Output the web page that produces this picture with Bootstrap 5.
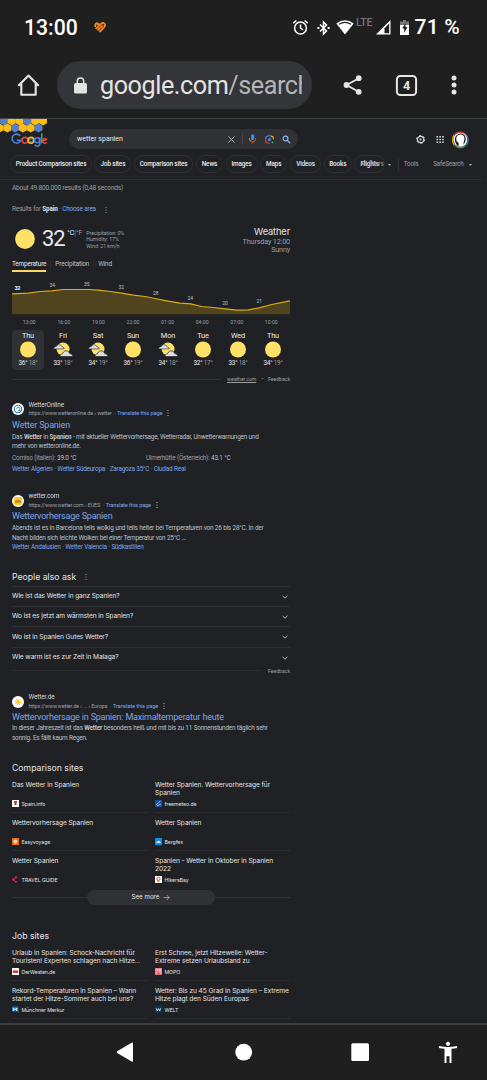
<!DOCTYPE html>
<html lang="de">
<head>
<meta charset="utf-8">
<meta name="viewport" content="width=device-width, initial-scale=1">
<title>wetter spanien</title>
<link href="https://cdn.jsdelivr.net/npm/bootstrap@5.3.0/dist/css/bootstrap.min.css" rel="stylesheet">
<style>
body{font-family:Roboto,"Liberation Sans",sans-serif;background:#202124;color:#bdc1c6;width:487px;height:1080px;overflow:hidden;font-size:6px;line-height:9.5px}
svg{display:block;flex:none}
a,a:not([href]):not([class]){text-decoration:none;color:#7ea6ea}
.gs{font-family:Inter,Roboto,sans-serif;color:#e2e4e8}
.statusbar{height:55px;background:#1f1f1f;color:#fff;padding-left:24px}
.clock{font-size:21.2px;font-weight:500;width:54px}
.lte{font-size:10.5px;color:#777;font-weight:500;letter-spacing:-.1px}
.batt{font-size:21px;font-weight:500;letter-spacing:.25px}
.toolbar{height:64px;background:#1f1f1f;border-bottom:1px solid #454746;padding:6px 0 0 17px}
.omni{width:255px;height:48px;border-radius:24px;background:#343539;margin-left:16px;padding-left:17px}
.urltext{width:202px;font-size:25.2px;line-height:36px;color:#e3e3e3;white-space:nowrap;overflow:hidden;margin:1px 1px 0 13px;letter-spacing:-.45px}
.fade2{color:#b5b6b8}
.viewport{height:904px;overflow:hidden}
.head{height:36px}
.logo{width:69px}
.gbox{width:229px;height:20px;margin-top:10px;border-radius:10px;background:#303134;color:#e8eaed;font-size:7px;padding:0 7px 0 8px}
.vr1{width:1px;height:12px;background:#44464a}
.chips{height:25px;padding-left:10px;border-bottom:1px solid #2d2e32;width:482px;font-size:6.4px;letter-spacing:-.15px}
.chip{height:18px;border:1px solid #2c2f33;border-radius:9px;color:#e8eaed;font-weight:500;display:flex;align-items:center;justify-content:center;margin-right:2.4px;white-space:nowrap;padding-top:1px}
.colm{width:278px;margin-left:12px;white-space:nowrap}
.txt{font-size:6.4px;letter-spacing:-.21px;word-spacing:.2px}
.dim{color:#9aa0a6}
.stats{height:19px;padding-top:4px;font-size:6.6px;letter-spacing:-.2px}
.area{height:18px;padding-top:4px;margin-top:2px;font-size:6.4px;letter-spacing:-.2px;word-spacing:.2px}
.t32{font-size:22px;line-height:21px;color:#e8eaed;letter-spacing:-1px}
.wx{height:32px;margin-top:9px}
.cond{font-size:5.3px;line-height:6.6px;letter-spacing:-.08px}
.tabs{height:14px;font-size:6.4px;letter-spacing:-.16px;color:#bdc1c6}
.tab-on{border-bottom:2px solid #fdd663;color:#e8eaed;height:12px}
.days{height:40px;margin-top:1.5px}
.day{width:32px;height:40px;border-radius:4px;text-align:center;font-size:7.4px;letter-spacing:-.15px;color:#e8eaed;margin-right:3px;flex:none;padding-top:1px}
.day svg{margin-top:1px}
.day.on{background:#303134}
.tmp{font-size:6.4px;line-height:11px;letter-spacing:-.22px}
.rule{height:1px;background:#313337}
.fb{font-size:5.2px;line-height:8px;color:#9aa0a6;letter-spacing:-.05px}
.ico{width:12px;height:12px;border-radius:50%;background:#fff;margin-top:1.5px}
.nm{font-size:6.4px;line-height:7.5px;color:#d5d8dc;letter-spacing:-.1px}
.ul{font-size:5.5px;line-height:8px;color:#9aa0a6;letter-spacing:-.17px}
.ul a{font-size:5.7px}
.ttl{font-size:9px;line-height:13px;height:14px;color:#7ea6ea;letter-spacing:-.22px}
.site{height:16px}
.h2x{font-size:8.7px;line-height:12px;height:12px}
.q{height:20.4px;border-top:1px solid #2d2e32;font-size:6.6px;letter-spacing:-.11px;padding:1px 1px 0 0}
.two{display:grid;grid-template-columns:135px 135px;column-gap:8px}
.cell{height:38px;font-size:6.6px;letter-spacing:-.08px;line-height:8.7px;border-bottom:1px solid #2b2d31;padding-top:6px}
.cell .tt{height:19px}
.src{font-size:5.2px;height:10px;line-height:8px}
.more{width:128px;height:15px;border-radius:8px;background:#303134;color:#e2e4e8;font-size:6.2px}
.navbot{height:57px;background:#1f1f1f;border-top:2px solid #3b3d3c}
text{font-family:Roboto,sans-serif}
</style>
</head>
<body>
<svg width="0" height="0" class="position-absolute">
<defs>
<symbol id="kebab" viewBox="0 0 4 8"><circle cx="2" cy="1.5" r=".6"/><circle cx="2" cy="4" r=".6"/><circle cx="2" cy="6.5" r=".6"/></symbol>
<symbol id="chev" viewBox="0 0 8 6"><path d="M1.500 1.800 4 4.200 6.500 1.800" fill="none" stroke="#bdc1c6" stroke-width=".9"/></symbol>
<symbol id="sun" viewBox="0 0 20 17"><circle cx="10" cy="8.500" r="8" fill="#ffe168"/></symbol>
<symbol id="cloudy" viewBox="0 0 20 17"><circle cx="10" cy="8" r="6.500" fill="#ffe168"/><path d="M.4 7.900q.2-2.300 2.900-2.500 1.500-2.800 4.400-1.200 1.500.8 1.600 1.800 1.800.2 1.900 1.900z" fill="#dcdee2" stroke="#202124" stroke-width=".6"/><path d="M7 15.500q-.1-2.600 2.700-3 1.200-3.300 4.500-2.500 2 .6 2.500 2.500 3 .3 3.200 3z" fill="#dcdee2" stroke="#202124" stroke-width=".7"/></symbol>
</defs>
</svg>

<div class="statusbar d-flex align-items-center">
  <span class="clock">13:00</span>
  <svg class="ms-3" width="12" height="11" viewBox="0 0 12 11" fill="none" stroke="#f5841f" stroke-width="1.900" stroke-linecap="round"><path d="M1.300 4.200V2.600Q2.300.4 4.300 1.800L3.700 2.400M2.300 6.400 7 1.900Q9.500-.1 10.800 2.200 11.400 4 10.200 5.200L6 9.500M4.100 7.900 8.200 3.900"/></svg>
  <svg style="margin-left:186px" width="17" height="17" viewBox="0 0 17 17" fill="none" stroke="#fff" stroke-width="1.500"><circle cx="8.500" cy="9" r="5.900"/><path d="M8.500 5.500V9l2.600 2M1.300 4.100 4.400 1.500M15.700 4.100l-3.100-2.600"/></svg>
  <svg class="ms-2" width="13" height="16" viewBox="0 0 13 16" fill="none" stroke="#fff" stroke-width="1.500"><path d="M3 4.500 9.500 11 6.500 14V2L9.500 5 3 11.500"/><path d="M.4 8h2M10.600 8h2" stroke-width="2"/></svg>
  <svg style="margin-left:6px" width="18" height="15" viewBox="0 0 18 15"><path d="M.3 3.500Q9-2.800 17.700 3.500L9 14.500z" fill="#fff"/><path d="M3 4.200Q9 .6 15 4.200" fill="none" stroke="#1f1f1f" stroke-width="1.200"/></svg>
  <span class="lte align-self-start pt-3 mt-1" style="width:20px;margin-left:2px;line-height:5px">LTE</span>
  <svg width="15" height="15" viewBox="0 0 15 15"><path d="M0 14.500 14.500 0V14.500z" fill="#fff"/><path d="M8.500 8.200 13.200 3.500v9.700H8.500z" fill="#1f1f1f"/></svg>
  <svg style="margin-left:8.500px" width="9" height="15" viewBox="0 0 9 15"><path d="M3 0h3v1.500h3V5H0V1.500h3z" fill="#777"/><path d="M0 5h9v10H0z" fill="#fff"/><path d="M5.500 3 2.200 8.500h2V13l3.300-6h-2z" fill="#1f1f1f"/></svg>
  <span class="batt" style="margin-left:6px">71 %</span>
</div>

<div class="toolbar d-flex">
  <div class="d-flex align-items-center" style="height:48px">
    <svg width="24" height="24" viewBox="0 0 24 24" fill="none" stroke="#e6e6e6" stroke-width="2.100" stroke-linejoin="round" stroke-linecap="round"><path d="M1.900 12.200 11.500 2.600l9.600 9.600M4.300 10.500v11.200h14.400V10.500"/></svg>
    <div class="omni d-flex align-items-center">
      <svg width="13" height="17" viewBox="0 0 13 17"><rect y="6" width="13" height="10.500" rx="1.500" fill="#e3e3e3"/><path d="M3.300 7V4.200a3.200 3.200 0 0 1 6.400 0V7" fill="none" stroke="#e3e3e3" stroke-width="1.500"/></svg>
      <div class="urltext">google.com<span class="fade2">/search</span></div>
    </div>
    <svg style="margin-left:31px" width="20" height="20" viewBox="0 0 20 20" fill="#e6e6e6"><path d="M16 3.300 3.600 10 16 17" fill="none" stroke="#e6e6e6" stroke-width="1.800"/><circle cx="15.700" cy="3.200" r="2.900"/><circle cx="3.500" cy="10" r="2.900"/><circle cx="15.700" cy="16.800" r="2.900"/></svg>
    <svg style="margin-left:32px" width="23" height="23" viewBox="0 0 23 23"><rect x="1.900" y="1.900" width="19.200" height="19.200" rx="3.500" fill="none" stroke="#e6e6e6" stroke-width="2"/><text x="11.600" y="16" text-anchor="middle" font-size="12.500" font-weight="700" fill="#e6e6e6">4</text></svg>
    <svg style="margin-left:33px" width="6" height="20" viewBox="0 0 6 20" fill="#e6e6e6"><circle cx="3" cy="3" r="2.500"/><circle cx="3" cy="10" r="2.500"/><circle cx="3" cy="17" r="2.500"/></svg>
  </div>
</div>

<div class="viewport">
  <div class="head d-flex">
    <svg class="logo" width="69" height="30" viewBox="0 0 69 30">
      <g id="hex"></g>
      <g fill="none" stroke-width="1.600"><path d="M20.200 16.900a4.500 4.500 0 1 0 .6 4.300h-4.200" stroke="#4f80d8"/><circle cx="25" cy="21.300" r="2.900" stroke="#e5453a"/><circle cx="31" cy="21.300" r="2.900" stroke="#f5bd1c"/><circle cx="31" cy="21.300" r="1.500" stroke="#4f80d8" stroke-width=".8"/><circle cx="37.100" cy="21.300" r="2.500" stroke="#4f80d8"/><path d="M39.900 18.400v6.400a2.700 2.500 0 0 1-5.200.8" stroke="#4f80d8"/><path d="M41.800 14.200v10" stroke="#35a853"/><path d="m43.400 21.800 3.100-1.400a2 2.500 0 1 0 .2 2.600" stroke="#e5453a" stroke-width="1.400"/></g>
    </svg>
    <div class="gbox d-flex align-items-center">
      <span style="width:150px;padding-top:1px">wetter spanien</span>
      <svg width="9" height="9" viewBox="0 0 9 9"><path d="m1.400 1.400 6.200 6.200m0-6.200L1.400 7.600" stroke="#b5b9be" stroke-width=".9"/></svg>
      <span class="vr1" style="margin-left:6px"></span>
      <svg style="margin-left:5px" width="9" height="10" viewBox="0 0 9 10" fill="none"><rect x="3" y=".3" width="3.200" height="5.700" rx="1.600" fill="#4285f4"/><path d="M1.600 4.300A3.100 3.100 0 0 0 2.500 7" stroke="#fbbc04" stroke-width="1"/><path d="M2.500 7a3.100 3.100 0 0 0 4.200 0M4.600 7.700v1.900" stroke="#ea4335" stroke-width="1.100"/><path d="M6.700 7a3.100 3.100 0 0 0 .9-2.700" stroke="#34a853" stroke-width="1"/></svg>
      <svg style="margin-left:8px" width="9" height="9" viewBox="0 0 9 9" fill="none" stroke-width="1.100"><path d="M.7 4V3q0-1.500 1.600-1.600L3.200.8h2.600" stroke="#4285f4"/><path d="M5.800.8 6.700 1.400Q8.300 1.500 8.300 3v1.200" stroke="#fbbc04"/><path d="M.7 4.500v2Q.9 8 2.500 8H5" stroke="#ea4335"/><circle cx="4.500" cy="4.600" r="1.600" fill="#4285f4"/><circle cx="7.500" cy="7.400" r=".9" fill="#34a853"/></svg>
      <svg style="margin-left:7.500px" width="9" height="9" viewBox="0 0 9 9" fill="none" stroke="#8ab4f8"><circle cx="3.500" cy="3.500" r="2.400" stroke-width="1.200"/><path d="m5.200 5.200 3 3" stroke-width="1.300"/></svg>
    </div>
    <svg style="margin:10px 0 0 116px" width="60" height="21" viewBox="0 0 60 21" >
      <g fill="none" stroke="#d5d7da"><circle cx="6.600" cy="10.500" r="3.200" stroke-width="1.200"/><circle cx="6.600" cy="10.500" r="4" stroke-width="1" stroke-dasharray="2.100 2.090"/></g><circle cx="6.600" cy="10.500" r="1.100" fill="#d5d7da"/>
      <path d="M22.500 7.700h7.300M22.500 10.500h7.300M22.500 13.300h7.300" stroke="#d5d7da" stroke-width="1.500" stroke-dasharray="1.600 1.250"/>
      <g fill="none" stroke-width="1.100"><path d="M40.200 5.800a8 8 0 0 1 12.200 0" stroke="#e04a3f"/><path d="M52.400 5.800a8 8 0 0 1 0 10" stroke="#4285f4"/><path d="M52.400 15.800a8 8 0 0 1-12.200 0" stroke="#34a853"/><path d="M40.200 15.800a8 8 0 0 1 0-10" stroke="#fbbc04"/></g>
      <circle cx="46.300" cy="10.700" r="7" fill="#fff"/><path d="M41.500 13.800Q40 9 42.500 6.200 46.300 3 50.300 6q2.500 3.400.6 7.600l-1.500 2.300.4-3.500q1.600-4-.5-6-2.800-1.700-6 .2-1.700 2.200-.8 5.400l2 2 .3 2.600h-1.600z" fill="#161616"/>
    </svg>
  </div>
  <div class="chips d-flex">
    <span class="chip" style="width:82px">Product Comparison sites</span><span class="chip" style="width:37px">Job sites</span><span class="chip" style="width:59.500px">Comparison sites</span><span class="chip" style="width:27.500px">News</span><span class="chip" style="width:32px">Images</span><span class="chip" style="width:27.500px">Maps</span><span class="chip" style="width:31.500px">Videos</span><span class="chip" style="width:28px">Books</span><span class="chip position-relative me-0" style="width:31px">Flights<span class="position-absolute dim" style="left:5px;font-weight:400;letter-spacing:-.15px">All filters</span></span>
    <span class="dim d-flex align-items-center" style="height:19px"><svg style="margin-left:2px" width="5" height="4" viewBox="0 0 5 4"><path d="M.8 1h3.400L2.500 2.900z" fill="#9aa0a6"/></svg><span class="vr1" style="margin-left:6px;background:#303236"></span><span style="margin-left:4.500px;width:29.500px">Tools</span><span style="letter-spacing:-.2px">SafeSearch</span><svg class="ms-1" width="5" height="4" viewBox="0 0 5 4"><path d="M.8 1h3.400L2.500 2.900z" fill="#9aa0a6"/></svg></span>
  </div>

  <div class="colm">
    <div class="stats dim">About 49.800.000 results (0,48 seconds)</div>
    <div class="area d-flex"><span class="dim">Results for <b style="color:#dfe1e5">Spain</b> · <a>Choose area</a></span><svg style="margin:1px 0 0 8px" width="4" height="8" fill="#9aa0a6"><use href="#kebab"/></svg></div>

    <div class="wx d-flex">
      <svg style="margin:.5px 7px 0 3px" width="20" height="20"><circle cx="10" cy="10" r="9.900" fill="#ffe168"/></svg>
      <span class="t32">32</span>
      <span class="dim" style="margin:1px 0 0 2.500px;font-size:6.900px;width:19px"><span style="color:#e8eaed">°C</span>|°F</span>
      <div class="cond dim" style="margin-top:1.500px">Precipitation: 0%<br>Humidity: 17%<br>Wind: 21 km/h</div>
      <div class="ms-auto text-end dim" style="margin-top:-1px;font-size:7.200px;letter-spacing:-.14px;line-height:8.500px"><div class="gs" style="font-size:9.300px;line-height:10.500px">Weather</div>Thursday 12:00<br>Sunny</div>
    </div>
    <div class="tabs d-flex"><span class="tab-on">Temperature</span><span class="vr1" style="height:9px;background:#2b2d31;margin:0 4px"></span>Precipitation<span class="vr1" style="height:9px;background:#2b2d31;margin:0 4px"></span>Wind</div>
    <svg id="chart" width="278" height="54" viewBox="12 273.500 278 54"></svg>
    <div class="days d-flex" id="days"></div>
    <div class="d-flex align-items-center fb" style="margin-top:5px;height:9px"><span class="rule" style="width:209px"></span><u class="ms-auto">weather.com</u><span style="margin:0 5px">•</span>Feedback</div>

    <div class="txt" style="margin-top:18px;height:91.500px">
      <div class="site d-flex"><svg class="ico" viewBox="0 0 12 12"><circle cx="6" cy="6" r="3.700" fill="none" stroke="#2676a8" stroke-width="1.100"/><path d="M4.500 6a1.700 1.700 0 1 1 1.700 1.700H8.500" fill="none" stroke="#2676a8" stroke-width=".8"/></svg>
        <div style="margin-left:4.500px"><div class="nm">WetterOnline</div><div class="ul d-flex">https://www.wetteronline.de › wetter&nbsp; ·&nbsp; <a>Translate this page</a><svg style="margin-left:4px" width="4" height="8" fill="#bdc1c6"><use href="#kebab"/></svg></div></div></div>
      <div class="ttl" style="margin-top:1px">Wetter Spanien</div>
      <div>Das <b>Wetter</b> in <b>Spanien</b> - mit aktueller Wettervorhersage, Wetterradar, Unwetterwarnungen und<br>mehr von wetteronline.de.</div>
      <div class="d-flex" style="margin-top:2px"><span style="width:134px"><span class="dim">Comiso (Italien):</span> 39.0 °C</span><span><span class="dim">Ulmerhütte (Österreich):</span> 43.1 °C</span></div>
      <div class="dim" style="margin-top:2px"><a>Wetter Algerien</a> · <a>Wetter Südeuropa</a> · <a>Zaragoza 35°C</a> · <a>Ciudad Real</a></div>
    </div>
    <div class="txt" style="height:77.500px">
      <div class="site d-flex"><svg class="ico" viewBox="0 0 12 12"><rect x="1.800" y="2" width="8.400" height="8" rx="2" fill="#ffc62b"/><path d="M3 7.800a3 3 0 0 1 6 0z" fill="#b98b21"/></svg>
        <div style="margin-left:4.500px"><div class="nm">wetter.com</div><div class="ul d-flex">https://www.wetter.com › EUES&nbsp; ·&nbsp; <a>Translate this page</a><svg style="margin-left:4px" width="4" height="8" fill="#bdc1c6"><use href="#kebab"/></svg></div></div></div>
      <div class="ttl" style="margin-top:1px">Wettervorhersage Spanien</div>
      <div>Abends ist es in Barcelona teils wolkig und teils heiter bei Temperaturen von 26 bis 28°C. In der<br>Nacht bilden sich leichte Wolken bei einer Temperatur von 25°C ...</div>
      <div class="dim" style="margin-top:-.5px"><a>Wetter Andalusien</a> · <a>Wetter Valencia</a> · <a>Südkastilien</a></div>
    </div>

    <div class="gs h2x d-flex" style="height:15px"><span>People also ask</span><svg style="margin:2.500px 0 0 8px" width="4" height="8" fill="#9aa0a6"><use href="#kebab"/></svg></div>
    <div class="gs q d-flex align-items-center justify-content-between">Wie ist das Wetter in ganz Spanien?<svg width="8" height="6"><use href="#chev"/></svg></div>
    <div class="gs q d-flex align-items-center justify-content-between">Wo ist es jetzt am wärmsten in Spanien?<svg width="8" height="6"><use href="#chev"/></svg></div>
    <div class="gs q d-flex align-items-center justify-content-between">Wo ist in Spanien Gutes Wetter?<svg width="8" height="6"><use href="#chev"/></svg></div>
    <div class="gs q d-flex align-items-center justify-content-between">Wie warm ist es zur Zeit in Malaga?<svg width="8" height="6"><use href="#chev"/></svg></div>
    <div class="d-flex align-items-center fb" style="height:7px"><span class="rule" style="width:250px;opacity:.6"></span><span class="ms-auto">Feedback</span></div>

    <div class="txt" style="margin-top:20px;height:67.500px">
      <div class="site d-flex"><svg class="ico" viewBox="0 0 12 12"><circle cx="6" cy="6" r="1.900" fill="#f8c524"/><circle cx="6" cy="6" r="2.700" fill="none" stroke="#f8c524" stroke-width="1.300" stroke-dasharray="1 1.120"/></svg>
        <div style="margin-left:4.500px"><div class="nm">Wetter.de</div><div class="ul d-flex">https://www.wetter.de › ... › Europa&nbsp; ·&nbsp; <a>Translate this page</a><svg style="margin-left:4px" width="4" height="8" fill="#bdc1c6"><use href="#kebab"/></svg></div></div></div>
      <div class="ttl" style="margin-top:.5px;height:13.500px">Wettervorhersage in Spanien: Maximaltemperatur heute</div>
      <div>In dieser Jahreszeit ist das <b>Wetter</b> besonders heiß und mit bis zu 11 Sonnenstunden täglich sehr<br>sonnig. Es fällt kaum Regen.</div>
    </div>

    <div class="gs h2x">Comparison sites</div>
    <div class="two gs" style="margin-top:1px">
      <div class="cell"><div class="tt">Das Wetter in Spanien</div><div class="src d-flex"><svg style="margin-right:2.500px" width="7" height="7" viewBox="0 0 7 7"><rect width="7" height="7" fill="#fff"/><path d="M2 1h3v2H2z" fill="#d63832"/><path d="M2.500 3h2v2h-2z" fill="#555"/></svg><span>Spain.info</span></div></div>
      <div class="cell"><div class="tt">Wetter Spanien. Wettervorhersage für<br>Spanien</div><div class="src d-flex"><svg style="margin-right:2.500px" width="7" height="7" viewBox="0 0 7 7"><rect width="7" height="7" fill="#174f9c"/><path d="M1 5 5.500 1M2 6l4-2" stroke="#9cc6ee" stroke-width=".9"/></svg><span>freemeteo.de</span></div></div>
      <div class="cell"><div class="tt">Wettervorhersage Spanien</div><div class="src d-flex"><svg style="margin-right:2.500px" width="7" height="7" viewBox="0 0 7 7"><rect width="7" height="7" rx=".6" fill="#f36b12"/><path d="M2 3.600h3a1.500 1.500 0 1 0-.5 1.100" fill="none" stroke="#fff" stroke-width=".9"/></svg><span>Easyvoyage</span></div></div>
      <div class="cell"><div class="tt">Wetter Spanien</div><div class="src d-flex"><svg style="margin-right:2.500px" width="7" height="7" viewBox="0 0 7 7"><rect width="7" height="7" rx=".6" fill="#088df0"/><path d="M1 4.800q.3-1.400 1.500-1.100 1.300-2 2.200 0 1.200-.1 1.300 1.100z" fill="#fff"/></svg><span>Bergfex</span></div></div>
      <div class="cell border-0"><div class="tt">Wetter Spanien</div><div class="src d-flex"><svg style="margin-right:2.500px" width="7" height="7" viewBox="0 0 7 7" fill="#e81e63"><path d="M4 1 1.200 3.500 4 6" fill="none" stroke="#e81e63" stroke-width=".9"/><circle cx="4" cy="1.200" r="1.100"/><circle cx="1.300" cy="3.500" r="1.200"/><circle cx="4" cy="5.800" r="1.100"/></svg><span>TRAVEL GUIDE</span></div></div>
      <div class="cell border-0"><div class="tt">Spanien - Wetter in Oktober in Spanien<br>2022</div><div class="src d-flex"><svg style="margin-right:2.500px" width="7" height="7" viewBox="0 0 7 7"><rect width="7" height="7" fill="#fff"/><circle cx="3.500" cy="2.800" r="1.600" fill="none" stroke="#ea4335"/><path d="M2.300 4 3.500 6.400" stroke="#34a853"/><path d="M4.900 4 3.500 6.400" stroke="#fbbc04"/></svg><span>HikersBay</span></div></div>
    </div>
    <div class="d-flex align-items-center" style="height:15px;margin-top:1px"><span class="rule flex-fill"></span><div class="gs more d-flex align-items-center justify-content-center">See more<svg style="margin-left:4px" width="7" height="7" viewBox="0 0 7 7"><path d="M.5 3.500h5.700M3.700 1l2.500 2.500L3.700 6" fill="none" stroke="#bdc1c6" stroke-width=".7"/></svg></div><span class="rule flex-fill"></span></div>

    <div class="gs h2x" style="margin-top:25px">Job sites</div>
    <div class="two gs" style="margin-top:1px">
      <div class="cell"><div class="tt">Urlaub in Spanien: Schock-Nachricht für<br>Touristen! Experten schlagen nach Hitze...</div><div class="src d-flex"><svg style="margin-right:2.500px" width="7" height="7" viewBox="0 0 7 7"><rect width="7" height="7" rx=".6" fill="#fff"/><path d="M.8 2.500h5.400v2.300H.8z" fill="#df1a2b"/></svg><span>DerWesten.de</span></div></div>
      <div class="cell"><div class="tt">Erst Schnee, jetzt Hitzewelle: Wetter-<br>Extreme setzen Urlaubsland zu</div><div class="src d-flex"><svg style="margin-right:2.500px" width="7" height="7" viewBox="0 0 7 7"><rect width="7" height="7" fill="#e76370"/><path d="M1 3V1h1.800v2M4.200 1H6v2H4.200zM1 6V4.200h1.800M4.200 4.200H6V6" stroke="#fff" stroke-width=".6" fill="none"/></svg><span>MOPO</span></div></div>
      <div class="cell"><div class="tt">Rekord-Temperaturen in Spanien – Wann<br>startet der Hitze-Sommer auch bei uns?</div><div class="src d-flex"><svg style="margin-right:2.500px" width="7" height="7" viewBox="0 0 7 7"><path d="M0 .5h6.500V7L5 5.500H0z" fill="#1579b8"/><path d="M1.500 5V2l1.600 1.800L4.700 2v3" stroke="#fff" stroke-width=".9" fill="none"/></svg><span>Münchner Merkur</span></div></div>
      <div class="cell"><div class="tt">Wetter: Bis zu 45 Grad in Spanien – Extreme<br>Hitze plagt den Süden Europas</div><div class="src d-flex"><svg style="margin-right:2.500px" width="7" height="7" viewBox="0 0 7 7"><rect width="7" height="7" fill="#06375c"/><path d="m1.200 2.300 1.100 2.500 1.200-2.300 1.200 2.300 1.100-2.500" stroke="#fff" stroke-width=".8" fill="none"/></svg><span>WELT</span></div></div>
    </div>
  </div>
</div>

<div class="navbot d-flex align-items-center">
  <svg width="487" height="55" viewBox="0 0 487 55" fill="#fff"><path d="M117.200 26.200 131.600 17.700q1.400-.6 1.400.9v17q0 1.500-1.400.9L117.200 28q-1.200-.9 0-1.800z"/><circle cx="243.700" cy="27.200" r="8.400"/><rect x="351.300" y="18.300" width="17.700" height="17.700" rx="1.500"/><circle cx="448" cy="18.800" r="2.100"/><path d="M439.200 21q8.800 1.800 17.600 0l.4 1.900q-2.800.6-5.700.8V38h-2v-6.800h-3V38h-2V23.700q-2.900-.2-5.700-.8z"/></svg>
</div>

<script>
// Honeycomb above the logo
const hex=[];
for(let r=0;r<2;r++)for(let c=0;c<6;c++){
  const x=r?c*7.800-.5:c*7.800+4,y=r?9:2;
  const blue=r?[2,5].includes(c):[0,3].includes(c);
  const p=[];for(let k=0;k<6;k++){const a=Math.PI/6+k*Math.PI/3;p.push((x+4.600*Math.cos(a)).toFixed(1)+','+(y+4.600*Math.sin(a)).toFixed(1));}
  hex.push(`<polygon points="${p.join(' ')}" fill="${blue?'#5680cb':'#fbbd17'}"/>`);
}
document.getElementById('hex').innerHTML=hex.join('');

// Hourly temperature curve
const pts=[[12,293.3],[28.3,292.7],[40,291],[51.7,290.3],[63.3,289],[88.3,289],[98.3,289.7],[110,291],[121.7,292.7],[133.3,294.7],[145,296],[155,298],[166.7,300.3],[180,302.7],[190.7,303.3],[201.7,306],[213.3,307],[225,308.3],[236.7,309.7],[248.3,309.3],[259.3,307.3],[271.7,304],[290,300.3]].map(p=>p.join(',')).join(' ');
const labs=[[17.5,289,32],[52.3,286.2,34],[86.7,285,35],[121.3,288.500,32],[155.7,294.400,28],[190.3,299,24],[225,304.500,20],[259.3,302.300,21]];
const hrs=['13:00','16:00','19:00','22:00','01:00','04:00','07:00','10:00'];
document.getElementById('chart').innerHTML=
 `<polygon points="12,313.700 ${pts} 290,313.700" fill="#50441f"/><polyline points="${pts}" fill="none" stroke="#dfae0d" stroke-width="1.200"/>`+
 labs.map((l,i)=>`<text x="${l[0]}" y="${l[1]}" text-anchor="middle" font-size="5" fill="${i?'#bdc1c6':'#fff'}" font-weight="${i?400:700}">${l[2]}</text>`).join('')+
 hrs.map((h,i)=>`<text x="${29.300+i*34.570}" y="323.300" text-anchor="middle" font-size="5.200" fill="#9aa0a6">${h}</text>`).join('');

// Eight day forecast
document.getElementById('days').innerHTML=[['Thu','sun',36,18],['Fri','cloudy',33,18],['Sat','cloudy',34,19],['Sun','sun',36,19],['Mon','cloudy',34,18],['Tue','sun',32,17],['Wed','sun',33,18],['Thu','sun',34,19]]
 .map((d,i)=>`<div class="day ${i?'':'on'}">${d[0]}<svg class="mx-auto" width="20" height="17"><use href="#${d[1]}"/></svg><div class="tmp">${d[2]}° <span class="dim">${d[3]}°</span></div></div>`).join('');
</script>
<script src="https://cdn.jsdelivr.net/npm/bootstrap@5.3.0/dist/js/bootstrap.bundle.min.js"></script>
</body>
</html>
